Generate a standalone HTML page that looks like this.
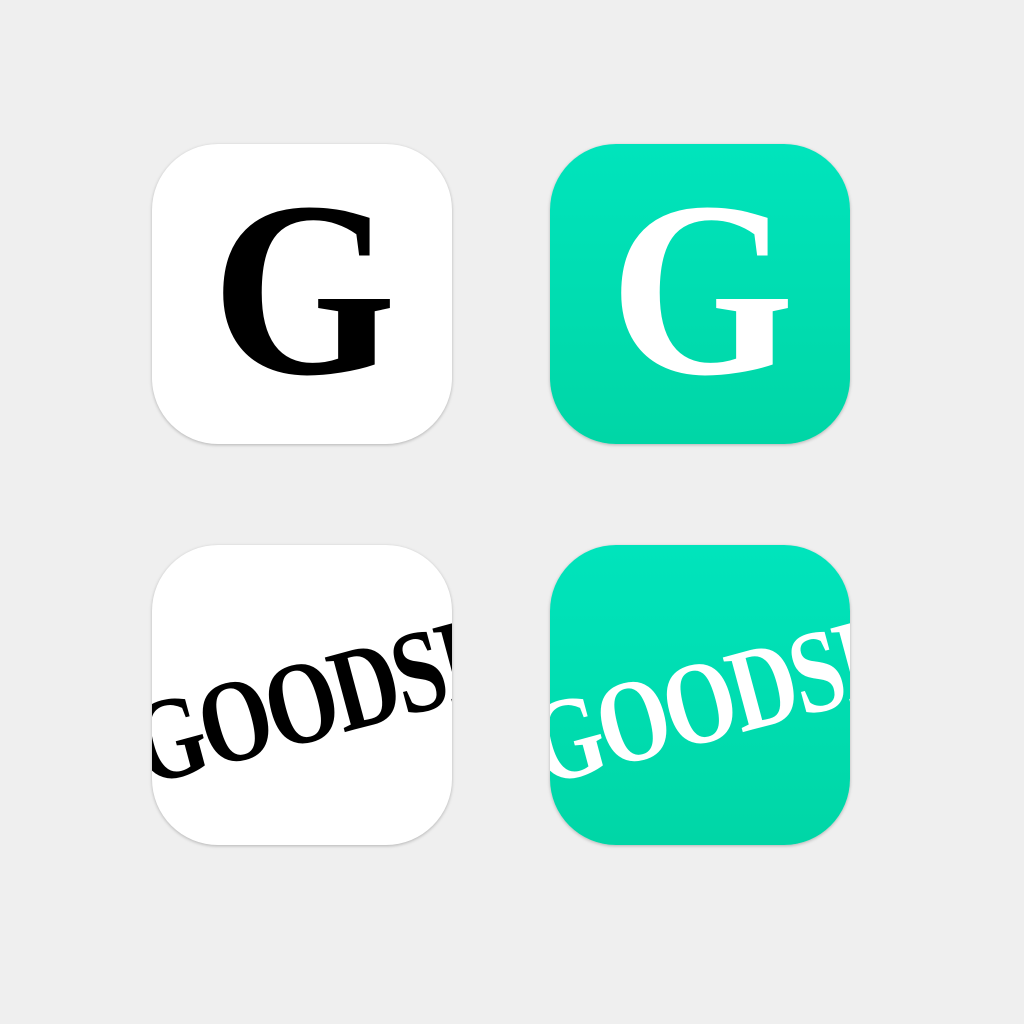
<!DOCTYPE html>
<html><head><meta charset="utf-8"><style>
html,body{margin:0;padding:0;width:1024px;height:1024px;background:#efefef;overflow:hidden}
.ic{position:absolute;width:300px;height:300px;border-radius:66px;overflow:hidden;box-shadow:0 1px 3px rgba(0,0,0,.25)}
.w{background:#fff;color:#000}
.t{background:linear-gradient(#00e4bc,#00d6a6);color:#fff}
.g{position:absolute;left:0;top:0;width:300px;text-align:center;font:bold 250px/300px "Liberation Serif",serif;transform:translate(2px,-4px) scaleX(0.95)}
.s{position:absolute;left:-2px;top:142px;white-space:nowrap;font:bold 118px/1 "Liberation Serif",serif;transform:rotate(-15deg) scaleX(0.78);transform-origin:0 100%;letter-spacing:-4px}
</style></head><body>
<div class="ic w" style="left:152px;top:144px"><div class="g">G</div></div>
<div class="ic t" style="left:550px;top:144px"><div class="g">G</div></div>
<div class="ic w" style="left:152px;top:545px"><div class="s">GOODSH</div></div>
<div class="ic t" style="left:550px;top:545px"><div class="s">GOODSH</div></div>
</body></html>
